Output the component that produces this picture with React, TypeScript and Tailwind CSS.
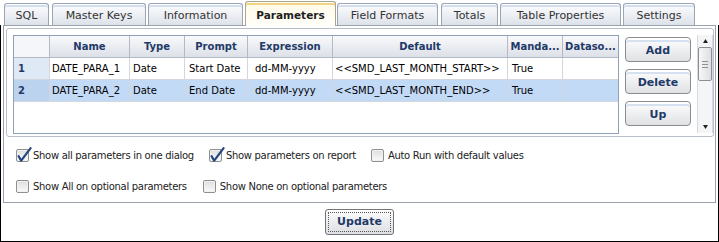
import React from "react";

const tabs = [
  { label: "SQL", cls: "w-[45px] ml-[4px]" },
  { label: "Master Keys", cls: "w-[94px] ml-[3px]" },
  { label: "Information", cls: "w-[95px] ml-[2px]" },
  { label: "Parameters", cls: "w-[91px] ml-[2px]", active: true },
  { label: "Field Formats", cls: "w-[101px] ml-[1px]" },
  { label: "Totals", cls: "w-[57px] ml-[3px]" },
  { label: "Table Properties", cls: "w-[121px] ml-[2px]" },
  { label: "Settings", cls: "w-[72px] ml-[2px]" },
];

const headers = ["", "Name", "Type", "Prompt", "Expression", "Default", "Manda...", "Dataso..."];
const pads = ["pl-[4px]", "pl-[2px]", "pl-[3px]", "pl-[4px]", "pl-[7px]", "pl-[2px]", "pl-[4px]", "pl-[4px]"];
const rows = [
  ["1", "DATE_PARA_1", "Date", "Start Date", "dd-MM-yyyy", "<<SMD_LAST_MONTH_START>>", "True", ""],
  ["2", "DATE_PARA_2", "Date", "End Date", "dd-MM-yyyy", "<<SMD_LAST_MONTH_END>>", "True", ""],
];

function Checkbox({ checked }: { checked?: boolean }) {
  return (
    <span className="relative block w-[13px] h-[13px] shrink-0 rounded-[2px] border border-[#8e8f8f] bg-gradient-to-b from-[#dedede] to-[#fbfbfb] shadow-[inset_0_0_0_1px_#f2f2f2]">
      {checked && (
        <svg className="absolute left-[-1px] top-[-4px]" width="17" height="18" viewBox="0 0 17 18">
          <path d="M2.6 10.2 L5.2 14.6 L14.6 2.2" fill="none" stroke="#24457f" strokeWidth="2.2" strokeLinecap="round" strokeLinejoin="round" />
        </svg>
      )}
    </span>
  );
}

function SideButton({ label }: { label: string }) {
  return (
    <div className="w-[66px] h-[25px] shrink-0 rounded-[4px] border border-[#8a8d92] bg-gradient-to-b from-[#fefefe] to-[#dfe1e4] shadow-[inset_0_2px_0_#ffffff,inset_0_4px_0_#d5e1f0] flex items-center justify-center pt-[3px] text-[11px] font-bold text-[#1f3a68]">
      {label}
    </div>
  );
}

function CheckItem({ checked, label }: { checked?: boolean; label: string }) {
  return (
    <div className="flex items-center gap-[4px]">
      <Checkbox checked={checked} />
      <span className="text-[10px] tracking-[-0.3px] text-[#222]">{label}</span>
    </div>
  );
}

export default function App() {
  return (
    <div className="w-[719px] h-[242px] bg-white overflow-hidden font-['DejaVu_Sans',sans-serif] text-black">
      {/* Tab strip */}
      <div className="h-[25px] flex items-end">
        {tabs.map((t) =>
          t.active ? (
            <div
              key={t.label}
              className={`${t.cls} relative z-10 -mb-px h-[25px] rounded-t-[3px] border border-b-0 border-[#a9a48c] bg-gradient-to-b from-[#fffbe8] to-[#fffef9] shadow-[inset_0_1px_0_#fffef6,inset_0_3px_0_#f2d485] flex items-center justify-center pt-[3px] text-[10.5px] font-bold text-[#1e1e1e]`}
            >
              {t.label}
            </div>
          ) : (
            <div
              key={t.label}
              className={`${t.cls} h-[22px] rounded-t-[3px] border border-b-0 border-[#9ca5b3] bg-gradient-to-b from-[#fdfdfe] to-[#dde2ea] shadow-[inset_0_1px_0_#ffffff,inset_0_3px_0_#d3dff0] flex items-center justify-center pt-[3px] text-[11px] text-[#333]`}
            >
              {t.label}
            </div>
          )
        )}
      </div>

      {/* Body */}
      <div className="h-[217px] border-x border-b border-black px-[2px]">
        {/* Panel */}
        <div className="h-[178px] border border-[#9aa2ad] bg-white">
          {/* Group frame */}
          <div className="mt-[2px] ml-[2px] mr-[1px] h-[109px] border border-[#b7bec8] rounded-[3px] flex pt-[6px] pl-[6px]">
            {/* Grid */}
            <div className="w-[606px] h-[99px] shrink-0 border border-[#8fa2bc] bg-white">
              <div className="grid grid-cols-[36px_80px_55px_63px_85px_175px_55px_55px]">
                {headers.map((h, i) => (
                  <div
                    key={"h" + i}
                    className={`h-[22px] border-b border-[#b3bac5] ${i < 7 ? "border-r" : ""} ${
                      i === 0 ? "bg-[#f4f6f9]" : "bg-gradient-to-b from-[#f9fafc] to-[#dce0e7]"
                    } flex items-center justify-center text-[10px] font-bold text-[#1f3a68] whitespace-nowrap overflow-hidden`}
                  >
                    {h}
                  </div>
                ))}
                {rows.map((r, ri) =>
                  r.map((c, ci) => (
                    <div
                      key={ri + "-" + ci}
                      className={`h-[22px] border-b border-[#d3d7dd] ${ci < 7 ? "border-r" : ""} ${pads[ci]} flex items-center whitespace-nowrap overflow-hidden text-[10px] ${
                        ci === 0
                          ? ri === 0
                            ? "bg-[#dfe9f6] font-bold text-[#1f3a68]"
                            : "bg-[#bcd3ef] font-bold text-[#1f3a68]"
                          : ri === 1
                          ? "bg-[#c3daf7]"
                          : "bg-white"
                      }`}
                    >
                      {c}
                    </div>
                  ))
                )}
              </div>
            </div>
            {/* Buttons column */}
            <div className="w-[78px] h-[98px] shrink-0 overflow-hidden flex flex-col gap-[7px] pt-[2px] pl-[6px]">
              <SideButton label="Add" />
              <SideButton label="Delete" />
              <SideButton label="Up" />
              <SideButton label="" />
            </div>
            {/* Scrollbar */}
            <div className="w-[16px] h-[98px] shrink-0 border-x border-[#d6d9de] bg-[#f4f5f6] flex flex-col">
              <div className="h-[12px] flex items-center justify-center">
                <svg width="5" height="4" viewBox="0 0 5 4">
                  <path d="M2.5 0 L5 4 L0 4 Z" fill="#222" />
                </svg>
              </div>
              <div className="h-[34px] rounded-[2px] border border-[#8b8f95] bg-gradient-to-r from-[#f7f7f7] to-[#dedfe1] flex flex-col items-center justify-center gap-[2px]">
                <span className="block w-[6px] h-px bg-[#8d9096]" />
                <span className="block w-[6px] h-px bg-[#8d9096]" />
                <span className="block w-[6px] h-px bg-[#8d9096]" />
              </div>
              <div className="flex-1" />
              <div className="h-[12px] flex items-center justify-center">
                <svg width="5" height="4" viewBox="0 0 5 4">
                  <path d="M0 0 L5 0 L2.5 4 Z" fill="#222" />
                </svg>
              </div>
            </div>
          </div>

          {/* Checkbox options */}
          <div className="mt-[10px] pl-[12px] flex flex-col gap-[15px]">
            <div className="h-[16px] flex items-center gap-[15px]">
              <CheckItem checked label="Show all parameters in one dialog" />
              <CheckItem checked label="Show parameters on report" />
              <CheckItem label="Auto Run with default values" />
            </div>
            <div className="h-[16px] flex items-center gap-[16px]">
              <CheckItem label="Show All on optional parameters" />
              <CheckItem label="Show None on optional parameters" />
            </div>
          </div>
        </div>

        {/* Update button */}
        <div className="mt-[6px] flex justify-center">
          <div className="w-[69px] h-[26px] rounded-[3px] border border-[#707378] bg-gradient-to-b from-[#fdfdfd] to-[#dcdee2] p-[2px]">
            <div className="w-full h-full border border-dotted border-[#555] rounded-[1px] flex items-center justify-center text-[11px] font-bold text-[#1f3a68]">
              Update
            </div>
          </div>
        </div>
      </div>
    </div>
  );
}
